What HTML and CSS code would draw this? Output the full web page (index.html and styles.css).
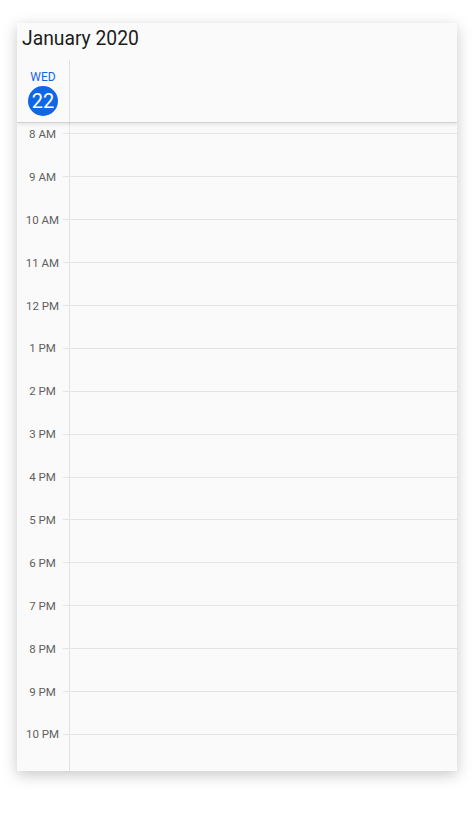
FILE: index.html
```html
<!DOCTYPE html>
<html lang="en">

<head>
    <meta charset="UTF-8">
    <meta name="viewport" content="width=device-width, initial-scale=1.0">
    <title>Calendar</title>
    <link rel="stylesheet" href="styles.css">
</head>

<body>
    <div class="calendar">
        <div class="header">
            <div class="title">January 2020</div>
            <div class="days">
                <div class="day today">
                    <span class="dow">WED</span>
                    <span class="num">22</span>
                </div>
                <div class="day-rest"></div>
            </div>
        </div>
        <div class="body">
            <div class="hours">
                <div class="hour"><span class="label">8 AM</span><span class="line"></span></div>
                <div class="hour"><span class="label">9 AM</span><span class="line"></span></div>
                <div class="hour"><span class="label">10 AM</span><span class="line"></span></div>
                <div class="hour"><span class="label">11 AM</span><span class="line"></span></div>
                <div class="hour"><span class="label">12 PM</span><span class="line"></span></div>
                <div class="hour"><span class="label">1 PM</span><span class="line"></span></div>
                <div class="hour"><span class="label">2 PM</span><span class="line"></span></div>
                <div class="hour"><span class="label">3 PM</span><span class="line"></span></div>
                <div class="hour"><span class="label">4 PM</span><span class="line"></span></div>
                <div class="hour"><span class="label">5 PM</span><span class="line"></span></div>
                <div class="hour"><span class="label">6 PM</span><span class="line"></span></div>
                <div class="hour"><span class="label">7 PM</span><span class="line"></span></div>
                <div class="hour"><span class="label">8 PM</span><span class="line"></span></div>
                <div class="hour"><span class="label">9 PM</span><span class="line"></span></div>
                <div class="hour"><span class="label">10 PM</span><span class="line"></span></div>
            </div>
        </div>
    </div>
</body>

</html>
```

FILE: styles.css
```css
* {
    margin: 0;
    padding: 0;
    box-sizing: border-box;
}

body {
    background: #fff;
    font-family: Roboto, "Liberation Sans", sans-serif;
}

.calendar {
    margin: 23px 17px;
    width: 440px;
    height: 748px;
    background: #fafafa;
    box-shadow: 0 4px 14px rgba(0, 0, 0, 0.22);
    display: flex;
    flex-direction: column;
    overflow: hidden;
}

.header {
    height: 100px;
    border-bottom: 1px solid #d2d2d2;
    box-shadow: 0 2px 3px rgba(0, 0, 0, 0.08);
    display: flex;
    flex-direction: column;
    position: relative;
    z-index: 1;
    background: #fafafa;
}

.title {
    height: 37px;
    padding-left: 5px;
    padding-top: 4px;
    font-size: 19.3px;
    color: #1c1c1c;
}

.days {
    flex: 1;
    display: flex;
}

.day {
    width: 53px;
    border-right: 1px solid #e2e2e2;
    display: flex;
    flex-direction: column;
    align-items: center;
    padding-top: 10px;
}

.dow {
    font-size: 12px;
    color: #0f67e6;
    line-height: 14px;
}

.num {
    margin-top: 2px;
    width: 30px;
    height: 30px;
    border-radius: 50%;
    background: #0f67e6;
    color: #fff;
    font-size: 20px;
    line-height: 30px;
    text-align: center;
}

.body {
    flex: 1;
    overflow: hidden;
    background: linear-gradient(#e2e2e2, #e2e2e2) no-repeat 52px 0 / 1px 100%;
}

.hours {
    margin-top: -10.5px;
}

.hour {
    height: 42.9px;
    display: flex;
    align-items: center;
}

.label {
    width: 46px;
    text-align: center;
    padding-left: 5px;
    font-size: 11.5px;
    color: #5f5f5f;
}

.line {
    flex: 1;
    height: 1px;
    background: #e4e4e4;
}
```
